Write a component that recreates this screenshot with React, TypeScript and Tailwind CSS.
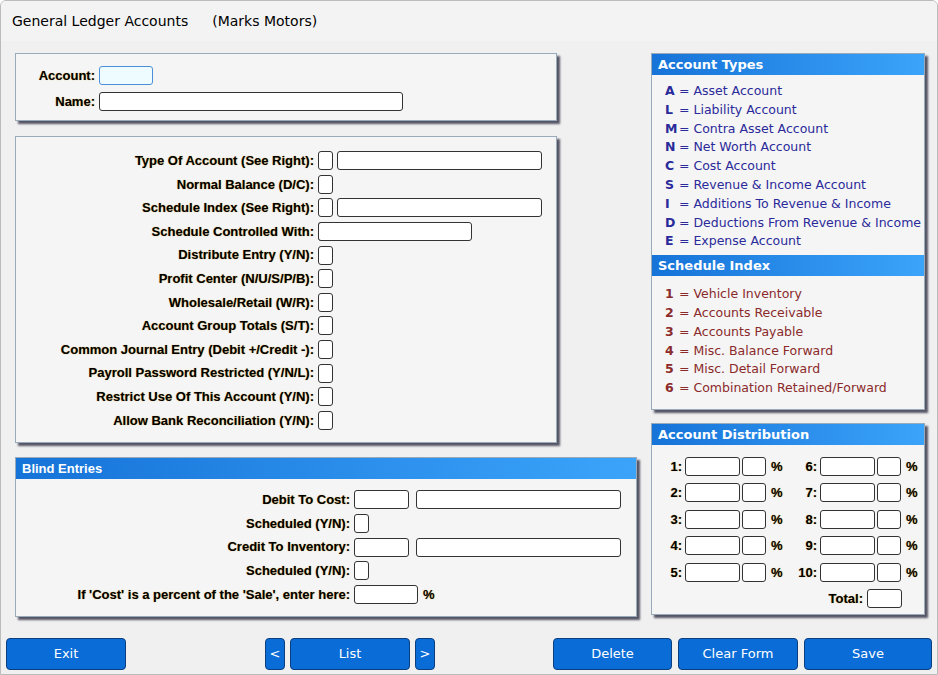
const lbl = "font-bold text-[13px] text-black [text-shadow:0_0_1px_#c89a3a]";
const box = "bg-white border border-[#333] rounded-[3px] h-[19px]";
const panel = "bg-[#f5f5f5] border border-[#9ab] shadow-[3px_3px_2px_#556]";
const hdr = "h-[21px] bg-gradient-to-r from-[#1673d8] to-[#3ba4fa] text-white font-bold text-[13px] px-[6px] flex items-center";
const btn = "h-[32px] bg-[#0a6cd6] border border-[#0b3f80] rounded-[4px] text-white text-[13px] flex items-center justify-center";

const rows: [string, boolean][] = [
  ["Type Of Account (See Right):", true],
  ["Normal Balance (D/C):", false],
  ["Schedule Index (See Right):", true],
  ["Schedule Controlled With:", false],
  ["Distribute Entry (Y/N):", false],
  ["Profit Center (N/U/S/P/B):", false],
  ["Wholesale/Retail (W/R):", false],
  ["Account Group Totals (S/T):", false],
  ["Common Journal Entry (Debit +/Credit -):", false],
  ["Payroll Password Restricted (Y/N/L):", false],
  ["Restrict Use Of This Account (Y/N):", false],
  ["Allow Bank Reconciliation (Y/N):", false],
];

const types = [
  ["A", "Asset Account"], ["L", "Liability Account"], ["M", "Contra Asset Account"],
  ["N", "Net Worth Account"], ["C", "Cost Account"], ["S", "Revenue & Income Account"],
  ["I", "Additions To Revenue & Income"], ["D", "Deductions From Revenue & Income"], ["E", "Expense Account"],
];
const sched = ["Vehicle Inventory", "Accounts Receivable", "Accounts Payable", "Misc. Balance Forward", "Misc. Detail Forward", "Combination Retained/Forward"];

const Dist = ({ n }: { n: number }) => (
  <div className="flex items-center h-[26.5px]">
    <span className={`${lbl} w-[30px] text-right mr-[3px]`}>{n}:</span>
    <div className={`${box} w-[55px]`} />
    <div className={`${box} w-[24px] ml-[2px]`} />
    <span className={`${lbl} ml-[5px] w-[14px]`}>%</span>
  </div>
);

export default function App() {
  return (
    <div className="w-[938px] h-[675px] bg-[#f0f0f0] overflow-hidden border border-[#bbb] rounded-t-[6px]" style={{ fontFamily: "Tahoma, 'DejaVu Sans', 'Liberation Sans', sans-serif" }}>
      <div className="h-[40px] bg-[#f3f3f3] flex items-center px-[11px] text-[14px] text-black gap-[24px]">
        <span>General Ledger Accounts</span><span>(Marks Motors)</span>
      </div>
      <div className="flex gap-[14px] pl-[14px] pt-[12px]" style={{ fontFamily: "'Liberation Sans', Arial, sans-serif" }}>
        <div className="w-[622px] flex flex-col">
          <div className={`${panel} w-[542px] h-[68px] pt-[12px]`}>
            <div className="flex items-center"><span className={`${lbl} w-[79px] text-right mr-[4px]`}>Account:</span><div className="h-[19px] w-[54px] bg-[#eefcff] border border-[#4a8fd8] rounded-[3px]" /></div>
            <div className="flex items-center mt-[6px]"><span className={`${lbl} w-[79px] text-right mr-[4px]`}>Name:</span><div className={`${box} w-[304px]`} /></div>
          </div>
          <div className={`${panel} w-[542px] h-[307px] mt-[15px] pt-[12px]`}>
            {rows.map(([t, wide]) => (
              <div key={t} className="flex items-center h-[23.6px]">
                <span className={`${lbl} w-[298px] text-right mr-[4px]`}>{t}</span>
                <div className={`${box} w-[15px]`} />
                {wide && <div className={`${box} w-[205px] ml-[4px]`} />}
                {t.startsWith("Schedule Controlled") && <div className={`${box} w-[154px] -ml-[15px]`} />}
              </div>
            ))}
          </div>
          <div className={`${panel} w-[622px] h-[160px] mt-[14px]`}>
            <div className={hdr}>Blind Entries</div>
            <div className="pt-[9px]">
              {[["Debit To Cost:", 1], ["Scheduled (Y/N):", 0], ["Credit To Inventory:", 1], ["Scheduled (Y/N):", 0], ["If 'Cost' is a percent of the 'Sale', enter here:", 2]].map(([t, k], i) => (
                <div key={i} className="flex items-center h-[23.7px]">
                  <span className={`${lbl} w-[334px] text-right mr-[4px]`}>{t}</span>
                  {k === 1 && <><div className={`${box} w-[55px]`} /><div className={`${box} w-[205px] ml-[7px]`} /></>}
                  {k === 0 && <div className={`${box} w-[15px]`} />}
                  {k === 2 && <><div className={`${box} w-[64px]`} /><span className={`${lbl} ml-[5px]`}>%</span></>}
                </div>
              ))}
            </div>
          </div>
        </div>
        <div className="w-[274px] flex flex-col text-[13px]" style={{ fontFamily: "Tahoma, 'DejaVu Sans', sans-serif" }}>
          <div className={`${panel} h-[357px]`}>
            <div className={hdr}>Account Types</div>
            <div className="pl-[13px] pt-[7px] text-[#2a2a9a] leading-[18.8px] text-[12.5px]">
              {types.map(([k, v]) => (
                <div key={k} className="flex"><span className="font-bold w-[13px]">{k}</span><span className="ml-[1px]">= {v}</span></div>
              ))}
            </div>
            <div className={`${hdr} mt-[4px]`}>Schedule Index</div>
            <div className="pl-[13px] pt-[9px] text-[#8a2a2a] leading-[18.8px] text-[12.5px]">
              {sched.map((v, i) => (
                <div key={v} className="flex"><span className="font-bold w-[13px]">{i + 1}</span><span className="ml-[1px]">= {v}</span></div>
              ))}
            </div>
          </div>
          <div className={`${panel} h-[192px] mt-[13px]`}>
            <div className={hdr}>Account Distribution</div>
            <div className="flex pt-[8px] gap-[2px]" style={{ fontFamily: "'Liberation Sans', Arial, sans-serif" }}>
              <div>{[1, 2, 3, 4, 5].map(n => <Dist key={n} n={n} />)}</div>
              <div>{[6, 7, 8, 9, 10].map(n => <Dist key={n} n={n} />)}
                <div className="flex items-center justify-end pr-[18px] h-[26px]"><span className={`${lbl} mr-[4px]`}>Total:</span><div className={`${box} w-[35px]`} /></div>
              </div>
            </div>
          </div>
        </div>
      </div>
      <div className="flex items-center mt-[21px] pl-[5px]" style={{ fontFamily: "Tahoma, 'DejaVu Sans', sans-serif" }}>
        <div className={`${btn} w-[120px]`}>Exit</div>
        <div className={`${btn} w-[20px] ml-[139px]`}>&lt;</div>
        <div className={`${btn} w-[120px] ml-[5px]`}>List</div>
        <div className={`${btn} w-[20px] ml-[5px]`}>&gt;</div>
        <div className={`${btn} w-[119px] ml-[118px]`}>Delete</div>
        <div className={`${btn} w-[120px] ml-[6px]`}>Clear Form</div>
        <div className={`${btn} w-[128px] ml-[6px]`}>Save</div>
      </div>
    </div>
  );
}
